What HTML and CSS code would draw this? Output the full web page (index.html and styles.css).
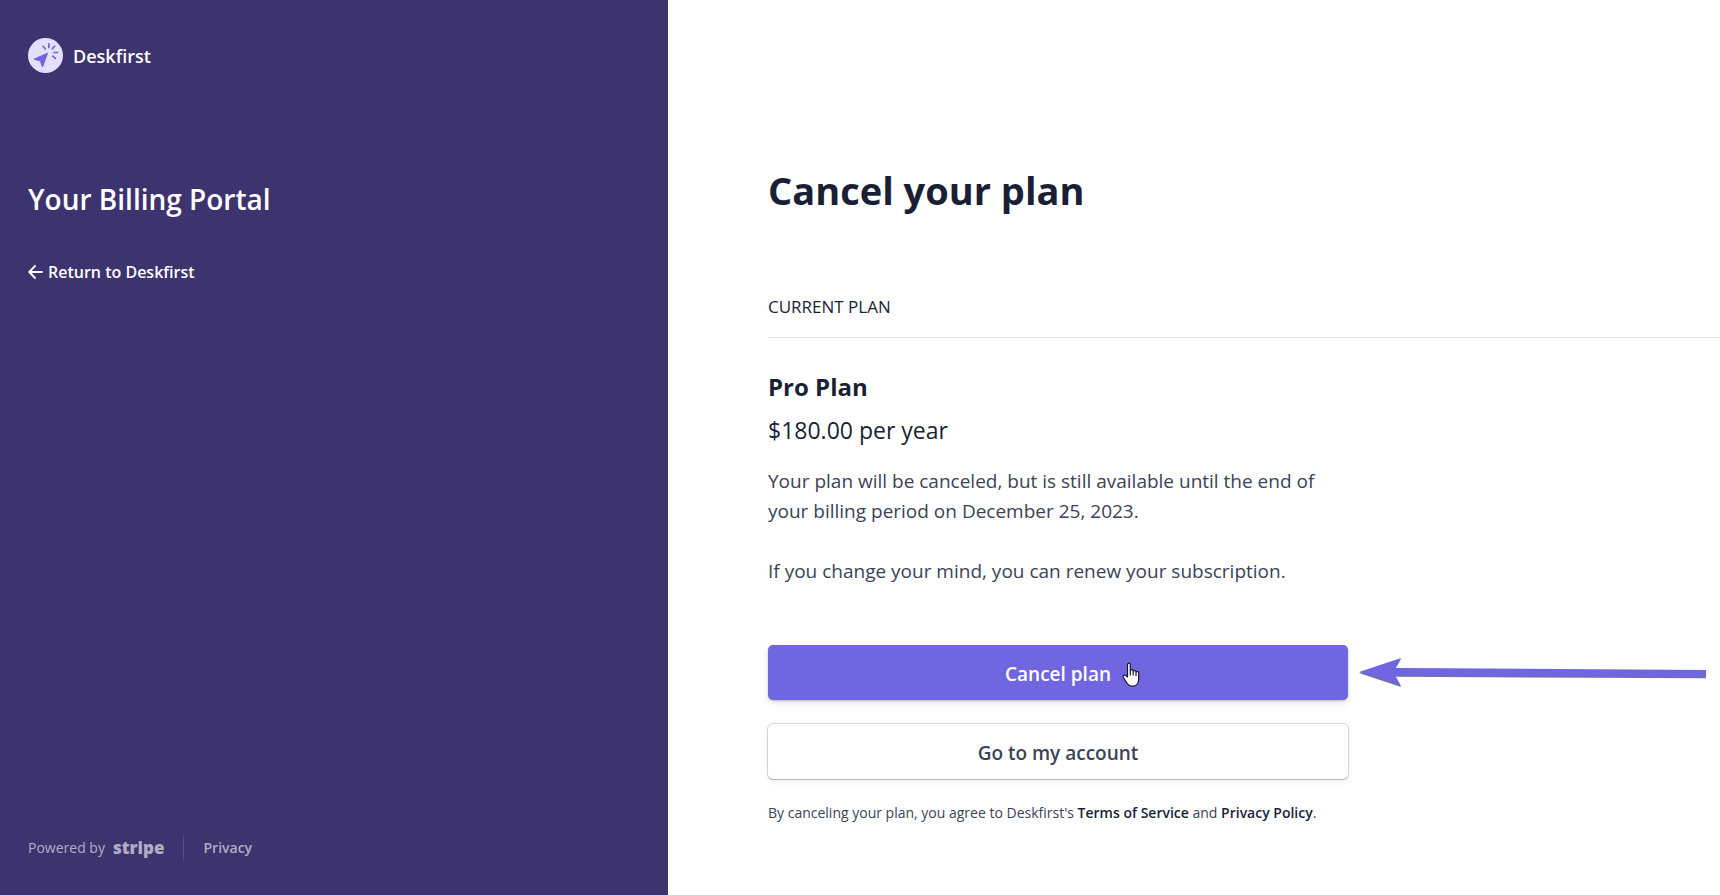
FILE: index.html
```html
<!DOCTYPE html>
<html lang="en">
<head>
<meta charset="utf-8">
<meta name="viewport" content="width=device-width, initial-scale=1">
<title>Cancel your plan</title>
<link rel="stylesheet" href="styles.css">
</head>
<body>
<div class="page">
  <aside class="sidebar">
    <div class="brand">
      <svg class="brand-mark" viewBox="0 0 35 35" aria-hidden="true">
        <circle cx="17.5" cy="17.5" r="17.5" fill="#e3e0fe"/>
        <path d="M19.500 15.200 14.500 29 12.300 22.800 6 21.200Z" fill="#6f64e0" stroke="#6f64e0" stroke-linejoin="round"/>
        <path d="M15 8.300 17.200 10.800M20.800 5.800V9.500M26.600 8.200 24.300 10.800M26 14.500H29.500M24.800 18.200 27.400 20.400" fill="none" stroke="#6f64e0" stroke-width="1.700" stroke-linecap="round"/>
      </svg>
      <span class="brand-name">Deskfirst</span>
    </div>
    <h2 class="portal-title">Your Billing Portal</h2>
    <a class="return-link" href="#">
      <svg class="return-arrow" viewBox="0 0 16 16" aria-hidden="true"><path d="M14 8H1.500M7 2 1.200 8 7 14" fill="none" stroke="#fff" stroke-width="1.800" stroke-linecap="round" stroke-linejoin="round"/></svg>
      <span>Return to Deskfirst</span>
    </a>
    <footer class="legal">
      <a class="powered" href="#">Powered by <span class="stripe">stripe</span></a>
      <a class="privacy" href="#">Privacy</a>
    </footer>
  </aside>
  <main class="main">
    <h1 class="title">Cancel your plan</h1>
    <h2 class="section-title">CURRENT PLAN</h2>
    <div class="column">
      <h3 class="plan-name">Pro Plan</h3>
      <p class="price">$180.00 per year</p>
      <p class="note">Your plan will be canceled, but is still available until the end of your billing period on December 25, 2023.</p>
      <p class="note">If you change your mind, you can renew your subscription.</p>
      <div class="action">
        <button class="button primary" type="button">Cancel plan</button>
        <svg class="hand" viewBox="0 0 18 26" aria-hidden="true"><path d="M5.500 15V2.600C5.500.6 8.300.6 8.300 2.600V8.500C9 7 11.200 7.400 11.200 9.200 12 8 14 8.500 14 10 15 9 16.700 9.600 16.700 11.300V17C16.700 21 14.500 24.200 10.500 24.200 7.500 24.200 6 23 4.700 20.800L1.300 15.300C.4 13.500 2.400 12.400 3.700 13.600Z" fill="#fff" stroke="#16162c" stroke-width="1.200" stroke-linejoin="round"/><path d="M8.300 8.500V13.500M11.200 9.200V13.500M14 10V14" stroke="#16162c" stroke-width="1.200"/></svg>
        <svg class="pointer" viewBox="0 0 348 30" aria-hidden="true"><path d="M0 15 42 29 36.500 18.800 347 20.300V13L36.500 10.500 42 1Z" fill="#777585"/><path d="M0 14 42 0 36.500 10 347 12V19.500L36.500 18 42 28Z" fill="#7066e0"/></svg>
      </div>
      <button class="button secondary" type="button">Go to my account</button>
      <p class="terms">By canceling your plan, you agree to Deskfirst's <a href="#">Terms of Service</a> and <a href="#">Privacy Policy</a>.</p>
    </div>
  </main>
</div>
</body>
</html>
```
FILE: styles.css
```css
* { box-sizing: border-box; }
body {
  margin: 0;
  font-family: "Open Sans", "Noto Sans", sans-serif;
  color: #1a1f36;
  background: #fff;
}
h1, h2, h3, p { margin: 0; }
a { color: inherit; text-decoration: none; }
.page {
  display: grid;
  grid-template-columns: minmax(0, 668fr) minmax(0, 1052fr);
  min-height: 100vh;
}
.sidebar {
  display: flex;
  flex-direction: column;
  align-items: flex-start;
  padding: 38px 28px 35px;
  background: #3d336f;
  color: #fff;
}
.brand { display: flex; align-items: center; gap: 10px; }
.brand-mark { width: 35px; height: 35px; }
.brand-name { font-size: 18px; font-weight: 600; line-height: 28px; }
.portal-title {
  margin-top: 106px;
  font-size: 28px;
  font-weight: 600;
  line-height: 40px;
}
.return-link {
  display: flex;
  align-items: center;
  gap: 4px;
  margin-top: 41px;
  font-size: 16px;
  font-weight: 600;
  line-height: 24px;
}
.return-arrow { width: 16px; height: 16px; }
.legal {
  display: flex;
  align-items: center;
  margin-top: auto;
  font-size: 14px;
  line-height: 25px;
  color: #b1adc5;
}
.powered { display: flex; align-items: center; gap: 8px; padding-right: 19px; border-right: 1px solid #564d82; }
.stripe { font-size: 17px; font-weight: 800; }
.privacy { padding-left: 19px; font-weight: 600; }
.main { padding: 161px 0 60px 100px; }
.title { font-size: 38px; font-weight: 700; line-height: 58px; }
.section-title {
  margin-top: 74px;
  padding-bottom: 16px;
  border-bottom: 1px solid #e3e8ee;
  font-size: 17px;
  font-weight: 500;
  line-height: 28px;
}
.column { max-width: 580px; margin-right: 16px; }
.plan-name { margin-top: 33px; font-size: 24px; font-weight: 700; line-height: 32px; }
.price { margin-top: 8px; font-size: 23px; line-height: 38px; }
.note { margin-top: 30px; font-size: 19px; line-height: 30px; color: #3c4257; }
.price + .note { margin-top: 17px; }
.action { position: relative; margin-top: 59px; }
.button {
  display: block;
  width: 100%;
  height: 55px;
  padding: 2px 0 0;
  border: 0;
  border-radius: 5px;
  font-family: inherit;
  font-size: 19px;
  font-weight: 600;
  cursor: pointer;
}
.primary { background: #7066e0; color: #fff; box-shadow: 0 1px 2px #0003, 0 3px 6px #3c425720; }
.secondary {
  margin-top: 24px;
  background: #fff;
  color: #3c4257;
  box-shadow: 0 0 0 1px #3c425730, 0 1px 1px #0002, 0 3px 6px #3c425714;
}
.hand { position: absolute; top: 17px; left: calc(50% + 64px); width: 18px; height: 26px; }
.pointer { position: absolute; top: 13px; left: calc(100% + 11px); width: 348px; height: 30px; }
.terms { margin-top: 22px; font-size: 14px; line-height: 24px; color: #3c4257; }
.terms a { font-weight: 600; color: #1a1f36; }
```
